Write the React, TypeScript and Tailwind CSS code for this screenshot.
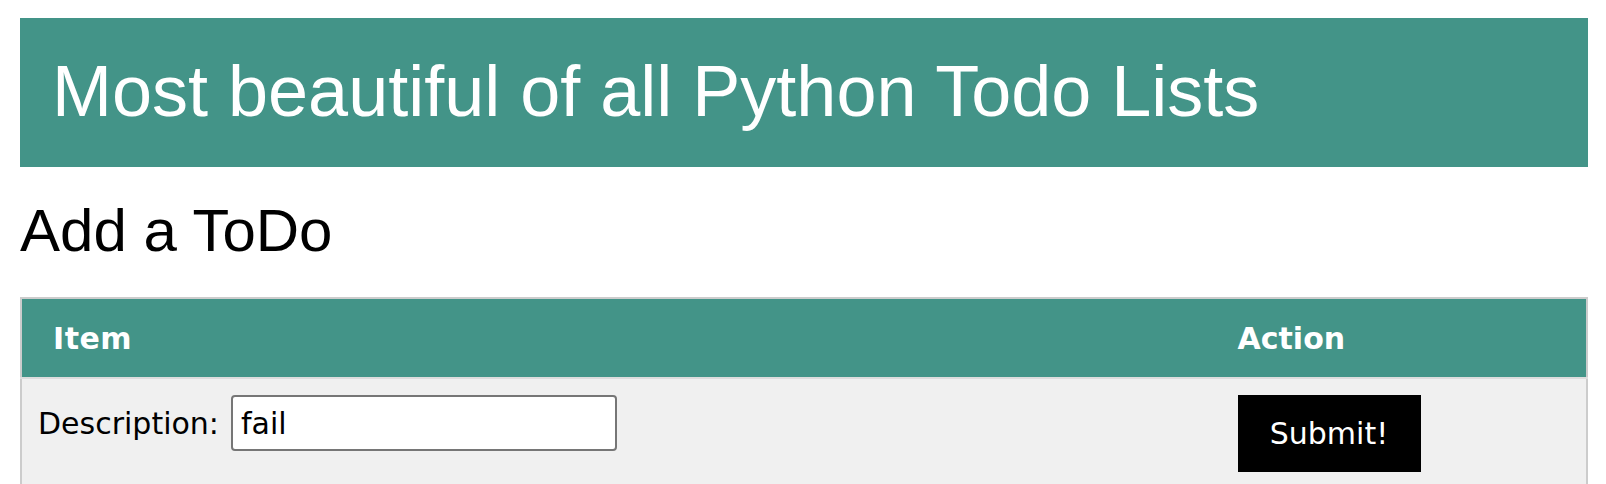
import { useState } from "react";

export default function App() {
  const [description, setDescription] = useState("fail");

  return (
    <div className="bg-white min-h-screen pl-5 pt-[18px] font-['Liberation_Sans',Arial,sans-serif]">
      <div className="w-[1568px]">
        {/* Banner */}
        <div className="bg-[#439488] h-[149px] pl-8 pt-[37px]">
          <h1 className="text-white text-[72px] leading-none font-normal">
            Most beautiful of all Python Todo Lists
          </h1>
        </div>

        <h2 className="text-black text-[60px] leading-none font-normal mt-[34px] mb-[36px]">Add a ToDo</h2>

        {/* Add form table */}
        <table className="w-full border-2 border-[#cccccc] table-fixed font-['DejaVu_Sans',Verdana,sans-serif] text-[30px]">
          <colgroup>
            <col className="w-[1184px]" />
            <col className="w-[380px]" />
          </colgroup>
          <thead>
            <tr className="bg-[#439488] text-white">
              <th className="h-[80px] px-[31px] text-left font-bold align-middle tracking-[0.5px]">Item</th>
              <th className="h-[80px] px-[31px] text-left font-bold align-middle">Action</th>
            </tr>
          </thead>
          <tbody>
            <tr className="bg-[#f0f0f0]">
              <td className="border-t-2 border-[#dddddd] pl-4 py-4 align-top">
                <div className="flex items-center">
                  <label className="text-black">Description:</label>
                  <input
                    value={description}
                    onChange={(e) => setDescription(e.target.value)}
                    className="ml-[12px] w-[386px] h-[56px] bg-white border-2 border-[#767676] rounded-[4px] pl-[8px] text-black text-[30px] outline-none"
                  />
                </div>
              </td>
              <td className="border-t-2 border-[#dddddd] pl-[31px] py-4 align-top">
                <button className="bg-black text-white w-[183px] h-[77px] text-[30px] leading-none">
                  Submit!
                </button>
              </td>
            </tr>
          </tbody>
        </table>
      </div>
    </div>
  );
}
